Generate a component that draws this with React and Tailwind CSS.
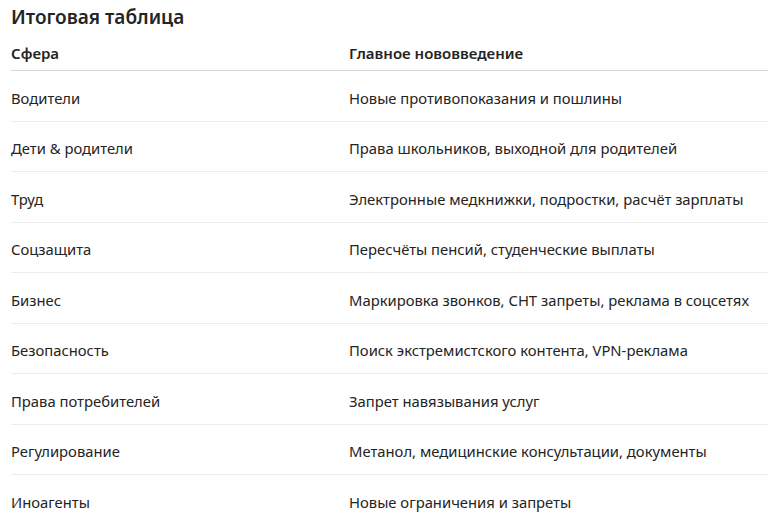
import React from 'react';

const ROWS = [
  ['Водители', 'Новые противопоказания и пошлины'],
  ['Дети & родители', 'Права школьников, выходной для родителей'],
  ['Труд', 'Электронные медкнижки, подростки, расчёт зарплаты'],
  ['Соцзащита', 'Пересчёты пенсий, студенческие выплаты'],
  ['Бизнес', 'Маркировка звонков, СНТ запреты, реклама в соцсетях'],
  ['Безопасность', 'Поиск экстремистского контента, VPN-реклама'],
  ['Права потребителей', 'Запрет навязывания услуг'],
  ['Регулирование', 'Метанол, медицинские консультации, документы'],
  ['Иноагенты', 'Новые ограничения и запреты'],
];

export default function App() {
  return (
    <div className="w-[768px] h-[532px] overflow-hidden bg-white pl-[11px] text-[#242424] font-['Noto_Sans',sans-serif]">
      <h2 className="pt-[4px] text-[19px] leading-[26px] font-semibold">Итоговая таблица</h2>
      <div className="w-[900px]">
        <div className="grid grid-cols-[338px_1fr] h-[41px] items-end pb-[7px] border-b border-[#d6d6d6] text-[15px] leading-[20px] font-semibold">
          <span>Сфера</span>
          <span>Главное нововведение</span>
        </div>
        {ROWS.map(([area, change], i) => (
          <div
            key={area}
            className={`grid grid-cols-[338px_1fr] h-[50.5px] items-center pt-[4px] text-[14.8px] ${i < ROWS.length - 1 ? 'border-b border-[#ececec]' : ''}`}
          >
            <span>{area}</span>
            <span>{change}</span>
          </div>
        ))}
      </div>
    </div>
  );
}
